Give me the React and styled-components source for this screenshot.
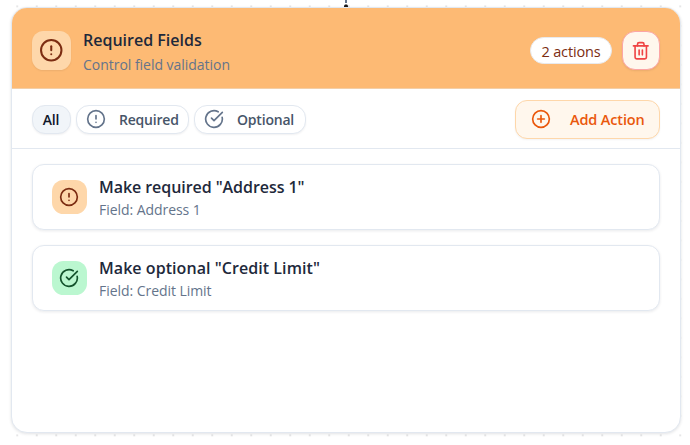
import React from "react";
import styled, { createGlobalStyle } from "styled-components";
import { CircleAlert, CircleCheckBig, CirclePlus, Trash2 } from "lucide-react";

const GlobalStyle = createGlobalStyle`
  * { box-sizing: border-box; }
  body { margin: 0; background: #fff; font-family: "Segoe UI", "Open Sans", "Noto Sans", sans-serif; }
`;

const Canvas = styled.div`
  position: relative;
  width: 690px;
  height: 445px;
  padding: 7px 0 0 11px;
  overflow: hidden;
  background-color: #fff;
  background-image: radial-gradient(circle, #a3a3a8 0.4px, transparent 0.8px);
  background-size: 19.5px 19.5px;
  background-position: 7.5px -3.4px;
`;

const Connector = styled.svg`
  position: absolute;
  left: 343px;
  top: 0;
`;

const Card = styled.section`
  display: flex;
  flex-direction: column;
  width: 670px;
  height: 426px;
  border: 1px solid #e2e8f0;
  border-radius: 16px;
  background: #fff;
  overflow: hidden;
  box-shadow: 0 1px 3px rgba(15, 23, 42, 0.12);
`;

const Header = styled.header`
  display: flex;
  align-items: center;
  height: 81px;
  flex: none;
  padding: 5px 20px 0 19.5px;
  background: #fdba74;
  border-bottom: 1px solid #f3cfa8;
`;

const IconTile = styled.div`
  display: flex;
  align-items: center;
  justify-content: center;
  flex: none;
  width: ${(p) => p.$size}px;
  height: ${(p) => p.$size}px;
  border-radius: 11.5px;
  color: ${(p) => p.$color};
  background: ${(p) => p.$bg};
  box-shadow: ${(p) => (p.$raised ? "0 1px 2px rgba(0,0,0,0.07)" : "none")};
`;

const Labels = styled.div`
  flex: 1;
  margin-left: 12.5px;
  padding-top: ${(p) => p.$drop || 0}px;
  white-space: nowrap;
`;

const Title = styled.div`
  font-size: 16px;
  line-height: 24px;
  font-weight: 600;
  letter-spacing: ${(p) => p.$track || 0}px;
  color: #1e293b;
`;

const Subtitle = styled.div`
  font-size: 14px;
  line-height: ${(p) => p.$line}px;
  letter-spacing: ${(p) => p.$track || 0}px;
  color: #64748b;
`;

const Badge = styled.span`
  display: flex;
  align-items: center;
  justify-content: center;
  width: 82px;
  height: 27px;
  padding-top: 1px;
  border: 1px solid #e8eaee;
  border-radius: 14px;
  background: #fff;
  color: #7c2d12;
  font-size: 14.5px;
  font-weight: 500;
  letter-spacing: -0.15px;
  white-space: nowrap;
`;

const DeleteButton = styled.button`
  display: flex;
  align-items: center;
  justify-content: center;
  width: 38px;
  height: 39px;
  margin-left: 10px;
  padding: 0;
  border: 1px solid #fca5a5;
  border-radius: 13px;
  background: #fff7ed;
  color: #ef4444;
  box-shadow: 0 1px 2px rgba(0, 0, 0, 0.08);
`;

const Toolbar = styled.div`
  display: flex;
  align-items: center;
  gap: 5px;
  height: 60px;
  flex: none;
  padding: 1px 20px 0 19.5px;
  border-bottom: 1px solid #e2e8f0;
`;

const Chip = styled.button`
  display: flex;
  align-items: center;
  justify-content: ${(p) => (p.$active ? "center" : "flex-start")};
  width: ${(p) => p.$width}px;
  height: 29px;
  padding: ${(p) => (p.$active ? "0" : "0 0 0 9.5px")};
  gap: 13px;
  border: 1px solid #e2e8f0;
  border-radius: 13px;
  background: ${(p) => (p.$active ? "#f1f5f9" : "#fff")};
  color: ${(p) => (p.$active ? "#0f172a" : "#475569")};
  font-family: inherit;
  font-size: 14px;
  font-weight: 600;
  letter-spacing: -0.2px;
  white-space: nowrap;
  box-shadow: 0 1px 2px rgba(15, 23, 42, 0.06);
  svg { color: #64748b; flex: none; }
`;

const AddButton = styled.button`
  display: flex;
  align-items: center;
  gap: 19px;
  width: 145px;
  height: 39px;
  margin-left: auto;
  padding: 0 0 0 15px;
  border: 1px solid #fed7aa;
  border-radius: 12px;
  background: #fff7ed;
  color: #ea580c;
  font-family: inherit;
  font-size: 14.5px;
  font-weight: 600;
  letter-spacing: -0.15px;
  white-space: nowrap;
  box-shadow: 0 1px 2px rgba(15, 23, 42, 0.05);
  svg { flex: none; }
`;

const ActionList = styled.div`
  display: flex;
  flex-direction: column;
  gap: 15px;
  padding: 15px 20px;
`;

const ActionRow = styled.article`
  display: flex;
  align-items: center;
  height: 66px;
  padding: 0 19px;
  border: 1px solid #e2e8f0;
  border-radius: 12px;
  background: #fff;
  box-shadow: 0 1px 3px rgba(15, 23, 42, 0.09);
`;

const actions = [
  { title: 'Make required "Address 1"', field: "Field: Address 1", icon: CircleAlert, bg: "#fed7aa", color: "#7c2d12", titleTrack: -0.06, fieldTrack: -0.05 },
  { title: 'Make optional "Credit Limit"', field: "Field: Credit Limit", icon: CircleCheckBig, bg: "#bbf7d0", color: "#14532d", titleTrack: 0.06, fieldTrack: -0.05 },
];

export default function App() {
  return (
    <>
      <GlobalStyle />
      <Canvas>
        <Card>
          <Header>
            <IconTile $size={39} $bg="#fed7aa" $color="#7c2d12" $raised>
              <CircleAlert size={24.5} />
            </IconTile>
            <Labels $drop={3}>
              <Title>Required Fields</Title>
              <Subtitle $line={25} $track={-0.03}>Control field validation</Subtitle>
            </Labels>
            <Badge>2 actions</Badge>
            <DeleteButton aria-label="Delete">
              <Trash2 size={19.5} />
            </DeleteButton>
          </Header>
          <Toolbar>
            <Chip $active $width={39}>All</Chip>
            <Chip $width={113}>
              <CircleAlert size={20} />
              Required
            </Chip>
            <Chip $width={112}>
              <CircleCheckBig size={20} />
              Optional
            </Chip>
            <AddButton>
              <CirclePlus size={20} />
              Add Action
            </AddButton>
          </Toolbar>
          <ActionList>
            {actions.map(({ icon: Icon, ...a }) => (
              <ActionRow key={a.title}>
                <IconTile $size={34.5} $bg={a.bg} $color={a.color}>
                  <Icon size={20} />
                </IconTile>
                <Labels>
                  <Title $track={a.titleTrack}>{a.title}</Title>
                  <Subtitle $line={21} $track={a.fieldTrack}>{a.field}</Subtitle>
                </Labels>
              </ActionRow>
            ))}
          </ActionList>
        </Card>
        <Connector width="6" height="8" viewBox="0 0 6 8">
          <path d="M3 0V3" stroke="#64748b" strokeWidth="2" />
          <path d="M1 7V5.5L2 4.5H4L5 5.5V7Z" fill="#18181b" />
        </Connector>
      </Canvas>
    </>
  );
}
